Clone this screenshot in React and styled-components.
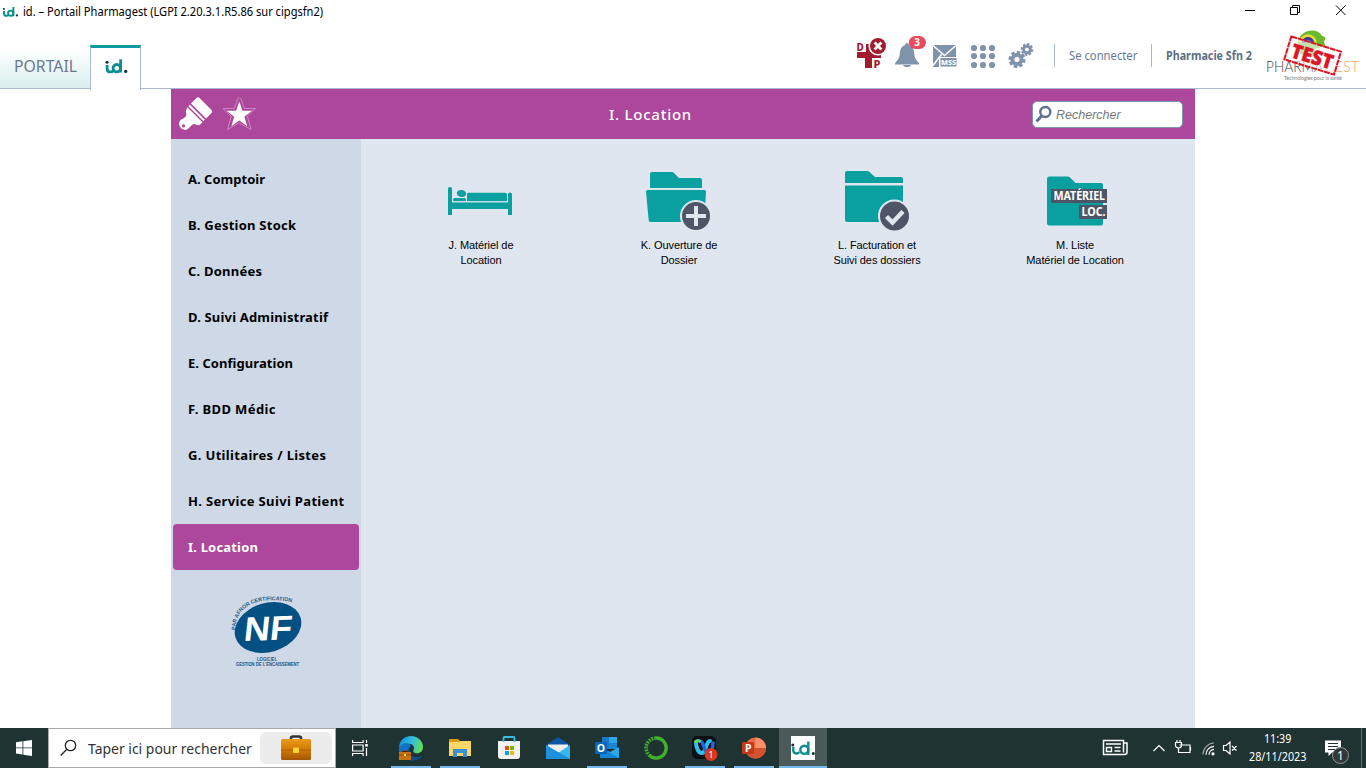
import React from "react";
import styled, { createGlobalStyle } from "styled-components";

const Global = createGlobalStyle`
  * { box-sizing: border-box; }
  html, body { margin: 0; padding: 0; background: #fff; overflow: hidden; }
  svg { display: block; flex: none; }
`;

const ui = `"Noto Sans", "Open Sans", sans-serif`;
const teal = "#0aa0a0";
const slate = "#8093ad";

const Screen = styled.div`
  width: 1366px;
  height: 768px;
  display: flex;
  flex-direction: column;
  font-family: ${ui};
`;
const TitleBar = styled.header`
  height: 24px;
  display: flex;
  align-items: center;
  padding-left: 2px;
  gap: 4px;
`;
const Squeezed = styled.span`
  display: block;
  flex: none;
  white-space: nowrap;
  width: ${(p) => p.$w}px;
  font-size: ${(p) => p.$size}px;
  line-height: ${(p) => p.$lh || 18}px;
  font-weight: ${(p) => p.$weight || 400};
  color: ${(p) => p.$color || "#000"};
  transform: scaleX(${(p) => p.$sx || 1});
  transform-origin: left center;
`;
const WindowButtons = styled.div`
  margin-left: auto;
  display: flex;
  padding: 0 18px 4px 0;
`;
const Header = styled.div`
  height: 65px;
  display: flex;
  border-bottom: 1px solid #a9b9d1;
`;
const PortalTab = styled.div`
  width: 90px;
  height: 64px;
  padding: 33px 0 0 14px;
  background: linear-gradient(#fff 40%, #d9eeee);
`;
const ActiveTab = styled.div`
  width: 51px;
  height: 44px;
  margin-top: 21px;
  background: #fff;
  border: 1px solid #a9b9d1;
  border-top: 3px solid #0e9b9b;
  border-bottom: 0;
  padding: 11px 0 0 14px;
  height: 45px;
  margin-bottom: -1px;
`;
const HeaderTools = styled.div`
  margin-left: auto;
  display: flex;
  align-items: flex-start;
`;
const ToolIcon = styled.div`
  width: ${(p) => p.$w}px;
  height: 64px;
`;
const Rule = styled.div`
  width: 1px;
  height: 23px;
  margin-top: 20px;
  background: #a9b9d1;
`;
const HeaderLink = styled.div`
  padding: 23px 0 0 14px;
  width: ${(p) => p.$w}px;
`;
const Portal = styled.main`
  width: 1024px;
  height: 639px;
  margin: 0 auto;
  display: flex;
  flex-direction: column;
  background: #dfe6f0;
`;
const SectionBar = styled.div`
  height: 50px;
  display: grid;
  grid-template-columns: 160px 1fr 163px;
  background: #ad479c;
`;
const SectionTitle = styled.h1`
  margin: 0;
  padding-left: 278px;
  font: 500 15px/51px ${ui};
  letter-spacing: 0.75px;
  color: #fff;
`;
const SearchBox = styled.div`
  width: 151px;
  height: 27px;
  margin-top: 12px;
  display: flex;
  align-items: center;
  background: #fff;
  border: 1px solid #7d93b8;
  border-radius: 5px;
  padding-left: 2px;
  gap: 4px;
  font: italic 12.5px/20px "Liberation Sans", Arial, sans-serif;
  color: #777;
`;
const Content = styled.div`
  flex: 1;
  display: flex;
`;
const Sidebar = styled.nav`
  width: 190px;
  background: #ced8e6;
  padding: 17px 2px 0;
`;
const MenuItem = styled.div`
  height: 46px;
  padding-left: 15px;
  border-radius: 4px;
  font: 700 13px/47px ${ui};
  letter-spacing: ${(p) => p.$tracking}px;
  white-space: nowrap;
  color: ${(p) => (p.$active ? "#fff" : "#000")};
  background: ${(p) => (p.$active ? "#ad479c" : "transparent")};
`;
const Certification = styled.div`
  padding: 22px 0 0 52px;
`;
const Tiles = styled.section`
  display: grid;
  grid-template-columns: repeat(4, 198px);
  align-content: start;
  padding: 29px 0 0 21px;
`;
const Tile = styled.div`
  display: flex;
  flex-direction: column;
  align-items: center;
  gap: 6px;
  text-align: center;
  white-space: pre-line;
  font: 11px/15px "Liberation Sans", Arial, sans-serif;
  letter-spacing: -0.08px;
  color: #000;
`;
const Taskbar = styled.footer`
  height: 40px;
  display: flex;
  background: #1f3332;
`;
const TaskCell = styled.div`
  width: 48px;
  height: 40px;
  margin-right: ${(p) => p.$gap || 0}px;
  display: flex;
  align-items: center;
  justify-content: center;
  position: relative;
  background: ${(p) => (p.$active ? "#4a5b5a" : "transparent")};
  &::after {
    content: "";
    position: absolute;
    bottom: 0;
    left: ${(p) => (p.$active ? 0 : 4)}px;
    right: ${(p) => (p.$active ? 0 : 4)}px;
    height: 2px;
    background: ${(p) => (p.$open ? "#76b9ed" : "transparent")};
  }
`;
const TaskSearch = styled.div`
  width: 288px;
  height: 40px;
  border: 1px solid #aaa;
  background: #fff;
  display: flex;
  align-items: center;
  padding: 0 3px 0 11px;
`;
const SearchHighlight = styled.div`
  margin-left: auto;
  width: 72px;
  height: 32px;
  border-radius: 7px;
  background: #ececec;
  display: flex;
  justify-content: center;
`;
const Tray = styled.div`
  margin-left: auto;
  display: flex;
`;
const Clock = styled.div`
  width: 72px;
  padding: 2px 0 0 1px;
  display: flex;
  flex-direction: column;
  align-items: flex-start;
`;
const ClockTime = styled.div`
  padding-left: 15px;
`;

const IdLogo = ({ w, h, d = "#0b8f8e" }) => (
  <svg width={w} height={h} viewBox="0 0 24 15">
    <g fill="none" stroke={d} strokeWidth="2.9">
      <path d="M2.200 6v3.200c0 2.700 1.500 4 3.500 4 1.300 0 2.300-.4 3.300-1.500" />
      <circle cx="12.300" cy="9.300" r="3.900" />
      <path d="M16.300 0v13.800" />
    </g>
    <circle cx="2.100" cy="3" r="1.600" fill="#14303d" />
    <circle cx="21.600" cy="12.700" r="1.700" fill="#14303d" />
  </svg>
);

const Gear = ({ x, y, r, hole, n, tooth }) => (
  <g transform={`translate(${x} ${y})`}>
    {Array.from({ length: n }, (_, i) => (
      <rect key={i} x={-tooth / 2} y={-r} width={tooth} height={r - hole} transform={`rotate(${(i * 360) / n + 12})`} fill={slate} />
    ))}
    <circle r={(r * 0.76 + hole) / 2} fill="none" stroke={slate} strokeWidth={r * 0.76 - hole} />
  </g>
);

const DpIcon = () => (
  <svg width="32" height="64" viewBox="856 24 32 64">
    <g fill="#a31c2e">
      <path d="M866 44h6.500v8h8.500v6h-9v10h-7v-10h-8v-6h9z" />
      <text x="856.500" y="51" fontFamily="Noto Sans" fontWeight="800" fontSize="10">D</text>
      <text x="873.500" y="68" fontFamily="Noto Sans" fontWeight="800" fontSize="11" stroke="#fff" strokeWidth="1.600" paintOrder="stroke">P</text>
      <circle cx="878" cy="46" r="9.600" fill="#fff" />
      <circle cx="878" cy="46" r="8" />
    </g>
    <path d="M874.600 42.600l6.800 6.800m0-6.800l-6.800 6.800" stroke="#fff" strokeWidth="2.800" />
  </svg>
);

const BellIcon = () => (
  <svg width="34" height="64" viewBox="894 24 34 64">
    <path fill={slate} d="M907 43c1.200 0 1.800.8 1.800 2 3.400 1 5.200 4 5.400 8 .2 4 1.200 6.500 4.800 10.200v1.300h-24v-1.300c3.600-3.700 4.600-6.200 4.800-10.200.2-4 2-7 5.400-8 0-1.200.6-2 1.800-2zM903 65h8c-.5 1.400-2 2-4 2s-3.500-.6-4-2z" />
    <rect x="908.800" y="36" width="17.200" height="13" rx="6.500" fill="#e94a5c" />
    <text x="917.200" y="46.200" fontSize="10" fontWeight="700" textAnchor="middle" fill="#fff" fontFamily="Noto Sans">3</text>
  </svg>
);

const MailIcon = () => (
  <svg width="34" height="64" viewBox="928 24 34 64">
    <path fill={slate} d="M933 45h23v12h-17v10h-6z" />
    <path d="M933 45.500l11.500 10 11.500-10M933 65.500l8.500-11" fill="none" stroke="#fff" strokeWidth="1.500" />
    <rect x="940" y="57.500" width="17" height="9.500" fill={slate} stroke="#fff" strokeWidth="1" />
    <text x="948.500" y="65" fontSize="7.500" fontWeight="800" textAnchor="middle" fill="#fff" fontFamily="Noto Sans" textLength="15" lengthAdjust="spacingAndGlyphs">MSS</text>
  </svg>
);

const AppsIcon = () => (
  <svg width="38" height="64" viewBox="964 24 38 64">
    {[48, 56, 65].map((y) => [974, 983, 992].map((x) => <circle key={`${x}${y}`} cx={x} cy={y} r="3.100" fill={slate} />))}
  </svg>
);

const PharmagestLogo = () => (
  <svg width="100" height="64" viewBox="1266 24 100 64">
    <path d="M1298 42c2-13 20-15 24-6 4 0 4 4 2 5l1 5-10 3-3 8-12-3z" fill="#69b92f" />
    <path d="M1300.500 43a7.500 7.500 0 0 1 15 0" fill="none" stroke="#e8dd37" strokeWidth="2.500" />
    <path d="M1302 43a6 6 0 0 1 12 0" fill="#47359a" />
    <path d="M1305 43a3 3 0 0 1 6 0" fill="#3fa6cf" />
    <text x="1266" y="72" fontFamily="Lato" fontWeight="300" fontSize="16.500" textLength="57" lengthAdjust="spacingAndGlyphs" fill="#444">PHARMA</text>
    <text x="1324" y="72" fontFamily="Lato" fontWeight="300" fontSize="16.500" textLength="35" lengthAdjust="spacingAndGlyphs" fill="#efa763">GEST</text>
    <text x="1284" y="80" fontFamily="Lato" fontSize="5.500" textLength="58" fill="#888">Technologies pour la santé</text>
    <g transform="translate(1312.500 56) rotate(17)">
      <rect x="-26" y="-12.500" width="52" height="24" fill="#fff" fillOpacity=".6" stroke="#dd1525" strokeWidth="2" strokeDasharray="6 .7" />
      <text x="0" y="7.500" textAnchor="middle" fontFamily="Noto Sans" fontWeight="900" fontSize="20" textLength="43" lengthAdjust="spacingAndGlyphs" fill="#dd1525" stroke="#dd1525" strokeWidth=".5">TEST</text>
    </g>
  </svg>
);

const Brush = () => (
  <svg width="90" height="50" viewBox="171 89 90 50">
    <g fill="#fff">
      <path d="M196.500 98q1.500-1.500 3 0l12 12q1.500 1.500 0 3l-5.500 5.500-15-15z" />
      <path d="M189.900 104.700l15 15-1.500 1.500-15-15z" />
      <path fillRule="evenodd" d="M187.400 107.200l15 15-2 2c-1.500 1.500-4 1-5.500-.2-1.500 0-2.800.7-3.700 1.700l-2.900 2.900c-4 4-11.500-2-8.500-7.500 1.500-2.500 5.500-2.800 6.500-5.900.5-2-1.300-3.500.1-5.500zM183.500 124.300a1.600 1.600 0 1 0 .1 3.200 1.600 1.600 0 0 0-.1-3.200z" />
      <path d="M239.300 101.500l3.200 9.300h9.500l-7.600 5.900 2.800 9.500-7.900-5.600-7.900 5.600 2.800-9.500-7.600-5.900h9.500z" />
    </g>
    <path d="M237.700 99q1.700-3 3.400 0l3.300 9.500h11.200l-8.200 7.500 3.600 13.500-11.700-6.500-11.700 6.500 3.600-13.500-8.200-7.500h11.200z" fill="none" stroke="#cd8fc3" strokeWidth=".9" />
  </svg>
);

const NfLogo = () => (
  <svg width="82" height="76" viewBox="225 592 82 76">
    <defs><path id="nf-arc" d="M235.500 630C235 615 245 602 267 600.500c9-.6 18 0 25 2" /></defs>
    <ellipse cx="268" cy="627.500" rx="34" ry="24.500" fill="#045083" transform="rotate(-17 268 627.500)" />
    <text fontFamily="Liberation Sans" fontSize="5.500" fontWeight="700" fill="#245d87"><textPath href="#nf-arc" textLength="73" lengthAdjust="spacingAndGlyphs">PAR AFNOR CERTIFICATION</textPath></text>
    <text x="0" y="0" fontFamily="Liberation Sans" fontWeight="700" fontSize="34" textLength="48" lengthAdjust="spacingAndGlyphs" fill="#fff" transform="translate(243 641) rotate(-2) skewX(-8)">NF</text>
    <g fontFamily="Liberation Sans" fontWeight="700" fontSize="5" fill="#1c5683" textAnchor="middle">
      <text x="267" y="660.500" textLength="20" lengthAdjust="spacingAndGlyphs">LOGICIEL</text>
      <text x="267.500" y="665.800" textLength="63" lengthAdjust="spacingAndGlyphs">GESTION DE L'ENCAISSEMENT</text>
    </g>
  </svg>
);

const BedIcon = () => (
  <svg width="64" height="64" viewBox="449 168 64 64" fill={teal} overflow="visible">
    <path d="M448 188.500q0-1.500 2-1.500t2 1.500V202h56v-8q0-1.500 2-1.500t2 1.500v21h-4v-6h-56v6h-4z" />
    <ellipse cx="461.500" cy="193.500" rx="4.700" ry="3.500" transform="rotate(8 461.500 193.500)" />
    <rect x="453" y="198" width="13" height="3.200" rx="1.500" />
    <path d="M468 192.700h37q2 0 2 2v6.500h-40v-6.500q0-2 1-2z" />
    <path d="M452 202h56" stroke="#dfe6f0" strokeWidth=".9" />
  </svg>
);
const OpenFolder = () => (
  <svg width="64" height="64" viewBox="647 168 64 64" overflow="visible">
    <path fill={teal} d="M650 188v-14q0-2 2-2h20q1 0 2 1l5 5h21q2 0 2 2v8zM647.500 190h57q1.500 0 1.500 1.500l-1.600 29q-.1 1.500-2 1.500h-51.500q-2 0-2.200-1.500L646 191.500q0-1.500 1.500-1.500z" />
    <circle cx="696" cy="216" r="15" fill="#4d5566" stroke="#dfe6f0" strokeWidth="2" />
    <path d="M696 206v20M686 216h20" stroke="#dfe6f0" strokeWidth="4" />
  </svg>
);
const CheckedFolder = () => (
  <svg width="64" height="64" viewBox="845 168 64 64">
    <path fill={teal} d="M845 183v-10q0-2 2-2h20q1.500 0 2.500 1l5.500 5h26q2 0 2 2v4zM845 185.500h58V222h-56q-2 0-2-2z" />
    <circle cx="894.500" cy="216" r="15.500" fill="#4d5566" stroke="#dfe6f0" strokeWidth="2" />
    <path d="M886.500 216.500l6 6 10.500-11" fill="none" stroke="#dfe6f0" strokeWidth="4.500" />
  </svg>
);
const EquipmentFolder = () => (
  <svg width="64" height="64" viewBox="1043 168 64 64">
    <path fill={teal} d="M1047 179q0-2.500 2-2.500h18.500q1.500 0 2.500 1l5.500 5.500h25.500q2 0 2 2v38q0 2.500-2 2.500h-51.500q-2.500 0-2.500-2.500z" />
    <path fill="#4d5566" d="M1051 189h56v14h-56zM1079 205h28v14h-28z" />
    <g fill="#fff" fontFamily="Noto Sans" fontWeight="700" fontSize="12">
      <text x="1053.500" y="200.400" textLength="51.500" lengthAdjust="spacingAndGlyphs">MATÉRIEL</text>
      <text x="1081.500" y="216.400" textLength="24" lengthAdjust="spacingAndGlyphs">LOC.</text>
    </g>
  </svg>
);

const EdgeIcon = () => (
  <svg width="26" height="26" viewBox="0 0 26 26">
    <defs><linearGradient id="edge" x1="0" y1="0.200" x2="1" y2=".4"><stop stopColor="#168bd9" /><stop offset=".55" stopColor="#32bedc" /><stop offset="1" stopColor="#65dc5c" /></linearGradient></defs>
    <path d="M1 13C1 5 7 1 13 1c7 0 12 5 12 11 0 5-4 7-8 6-3-1-1-3-1-5 0-5-9-6-15 0z" fill="url(#edge)" />
    <path d="M1 13c3-6 10-6 12-2-3 2-3 9 3 11 3 1 6 0 8-1-3 4-8 5-12 4C5 24 0 19 1 13z" fill="#1272c8" />
    <path d="M13 11c-3 3-3 9 3 11 3 1 6 0 8-1-3 4-8 5-12 4-5-4-4-11 1-14z" fill="#114c8c" />
    <path d="M1 17h12v8H1z" fill="#c97310" /><path d="M4 17v-1h6v1M1 20h12" stroke="#8a480b" /><path d="M6 19h2v2H6z" fill="#ffd43b" />
  </svg>
);
const ExplorerIcon = () => (
  <svg width="24" height="22" viewBox="0 0 24 22">
    <path d="M1 2h9l2 2h10v6H1z" fill="#dd9b08" /><path d="M1 5h10l1-1h11v15H1z" fill="#ffd768" />
    <path d="M5 12h14v8h-4v-4H9v4H5z" fill="#3992d8" />
  </svg>
);
const StoreIcon = () => (
  <svg width="24" height="24" viewBox="0 0 24 24">
    <path d="M1 5h22v15q0 3-3 3H4q-3 0-3-3z" fill="#f2f2f2" />
    <path d="M6.500 6V2q0-1 1-1h9q1 0 1 1v4" fill="none" stroke="#38bce8" strokeWidth="1.800" />
    <path d="M8 10h4v4H8z" fill="#e64a24" /><path d="M13 10h4v4h-4z" fill="#73b900" /><path d="M8 15h4v4H8z" fill="#00a1ed" /><path d="M13 15h4v4h-4z" fill="#ffb800" />
  </svg>
);
const MailApp = () => (
  <svg width="26" height="24" viewBox="0 0 26 24">
    <path d="M1 9L13 1l12 8v5H1z" fill="#0b57a4" /><path d="M3 8.500h20v8H3z" fill="#eee" />
    <path d="M1 9l12 8L25 9v14H1z" fill="#38b5ef" /><path d="M1 9l24 14H1z" fill="#1c91de" />
  </svg>
);
const OutlookIcon = () => (
  <svg width="26" height="24" viewBox="0 0 26 24">
    <path d="M8 1h15v12H8z" fill="#1479c9" /><path d="M15 1h8v6h-8z" fill="#30a6e8" /><path d="M15 7h8v6h-8z" fill="#1c85d0" />
    <path d="M6 11l10 5 9-5v11H6z" fill="#2aa8e8" /><path d="M6 11l19 11H6z" fill="#1485d5" />
    <rect x="1" y="6" width="12" height="12" rx="1" fill="#0864b8" />
    <text x="7" y="15.800" fontFamily="Noto Sans" fontWeight="700" fontSize="10.500" textAnchor="middle" fill="#fff">O</text>
  </svg>
);
const RingIcon = () => (
  <svg width="26" height="26" viewBox="0 0 26 26" fill="none" stroke="#43b02a">
    <path d="M13 3a10 10 0 1 1-7 17" strokeWidth="3.400" /><path d="M13 3A10 10 0 0 0 6 20" strokeWidth="3.600" strokeDasharray="1.800 1" />
  </svg>
);
const WebexIcon = () => (
  <svg width="28" height="28" viewBox="0 0 28 28">
    <rect x="1" y="2" width="24" height="23" rx="5" fill="#0c1015" />
    <path d="M5 8c0 7 3 11 6 11 4 0 4-12 8-12" stroke="#2cbff0" strokeWidth="4" fill="none" strokeLinecap="round" />
    <path d="M9 7c4 0 4 12 8 12 3 0 5-4 5-10" stroke="#2565df" strokeWidth="3.500" fill="none" strokeLinecap="round" />
    <path d="M4.500 9c0-3 3-3 5-1" stroke="#62d568" strokeWidth="3" fill="none" />
    <circle cx="20" cy="20.500" r="6.500" fill="#d9371e" /><text x="20" y="24" fontSize="9.500" fontFamily="Noto Sans" textAnchor="middle" fill="#fff">1</text>
  </svg>
);
const PowerpointIcon = () => (
  <svg width="26" height="24" viewBox="0 0 26 24">
    <circle cx="14.500" cy="12" r="10.500" fill="#ed6c47" /><path d="M14.500 1.500A10.500 10.500 0 0 1 25 12H14.500z" fill="#ff8f6b" /><path d="M4 12h21a10.500 10.500 0 0 1-21 0z" fill="#d35230" />
    <rect x="1" y="6" width="12" height="12" rx="1" fill="#c13b1b" /><text x="7.200" y="15.800" fontFamily="Noto Sans" fontWeight="700" fontSize="10.500" textAnchor="middle" fill="#fff">P</text>
  </svg>
);
const IdTaskIcon = () => (
  <svg width="24" height="24" viewBox="0 0 24 24">
    <path fill="#fff" d="M0 0h24v24H0z" />
    <g fill="none" stroke="#0b8f8e" strokeWidth="2.400"><path d="M2.300 11v3.500c0 3 4 4 6 1.500" /><circle cx="13.300" cy="13.800" r="4" /><path d="M17.300 5.500V19" /></g>
    <circle cx="1.800" cy="9" r="1.500" fill="#14303d" /><circle cx="22.300" cy="17.500" r="1.500" fill="#14303d" />
  </svg>
);
const Briefcase = () => (
  <svg width="32" height="32" viewBox="280 732 32 32">
    <defs><linearGradient id="case" x1="0" y1="0" x2="0" y2="1"><stop stopColor="#e99a16" /><stop offset=".5" stopColor="#d27c07" /><stop offset="1" stopColor="#a45605" /></linearGradient></defs>
    <path d="M291 740v-2q0-1.500 2-1.500h6q2 0 2 1.500v2" fill="none" stroke="#30343a" strokeWidth="2.500" />
    <rect x="281" y="739" width="30" height="21" rx="1.500" fill="url(#case)" /><path d="M281 750h30" stroke="#aa5d09" />
    <rect x="293" y="747.500" width="6" height="5.500" rx="1" fill="#ffd42a" />
  </svg>
);
const TrayIcons = () => (
  <svg width="153" height="40" viewBox="1095 728 153 40" fill="none" stroke="#fff" strokeWidth="1.200">
    <path d="M1106.500 754.500h-3v-14h20v2.500h3.500v9q0 2.500-2.500 2.500h-18zM1123.500 743v9.500" strokeWidth="1.500" />
    <path d="M1106 744h15M1114.500 747.500h6M1114.500 751h6" strokeWidth="1.400" /><path d="M1106.500 747.500h5v4h-5z" strokeWidth="1.400" />
    <path d="M1153.500 751l5.500-5.500 5.500 5.500" />
    <path d="M1179.500 745h10.500v7.500h-8.500M1190.500 747v3.500M1175.500 742.500h6v3q0 2-3 2.500-3-.5-3-2.500zM1177 740v2.500M1180 740v2.500M1178.500 748v4.500h5" />
    <g><path d="M1203 754.500a11.500 11.500 0 0 1 11-11.500" opacity=".55" /><path d="M1206 754.800a8.500 8.500 0 0 1 8-8.500M1209 754.800a5.500 5.500 0 0 1 5-5.500" /><circle cx="1213" cy="753.800" r="1" fill="#fff" /></g>
    <path d="M1223.500 745.500h2.500l4-3.500v12l-4-3.500h-2.500zM1232 746l4.500 4.500m0-4.500l-4.500 4.500" />
  </svg>
);

const menu = [
  ["A. Comptoir", 0.02], ["B. Gestion Stock", 0.24], ["C. Données", 0.22], ["D. Suivi Administratif", 0.17], ["E. Configuration", 0.05],
  ["F. BDD Médic", 0.38], ["G. Utilitaires / Listes", 0.34], ["H. Service Suivi Patient", 0.34], ["I. Location", 0.18, true],
];
const tiles = [
  [<BedIcon />, "J. Matériel de\nLocation"], [<OpenFolder />, "K. Ouverture de\nDossier"],
  [<CheckedFolder />, "L. Facturation et\nSuivi des dossiers"], [<EquipmentFolder />, "M. Liste\nMatériel de Location"],
];
const apps = [
  [<EdgeIcon />, true], [<ExplorerIcon />, true], [<StoreIcon />, false], [<MailApp />, false], [<OutlookIcon />, true],
  [<RingIcon />, false], [<WebexIcon />, true], [<PowerpointIcon />, true],
];

export default function App() {
  return (
    <Screen>
      <Global />
      <TitleBar>
        <IdLogo w={17} h={10} />
        <Squeezed $w={310} $size={12} $sx={0.925}>id. – Portail Pharmagest (LGPI 2.20.3.1.R5.86 sur cipgsfn2)</Squeezed>
        <WindowButtons>
          <svg width="104" height="12" viewBox="1244 4 104 12" fill="none" stroke="#000">
            <path d="M1245 10.500h10M1290.500 7.500h7v7h-7zM1292.500 7.500v-2h7v7h-2M1336 5.500l9.500 9.500m0-9.500l-9.500 9.500" />
          </svg>
        </WindowButtons>
      </TitleBar>
      <Header>
        <PortalTab><Squeezed $w={63} $size={16} $sx={0.985} $color="#6a7891">PORTAIL</Squeezed></PortalTab>
        <ActiveTab><IdLogo w={23} h={15} /></ActiveTab>
        <HeaderTools>
          <ToolIcon $w={38}><DpIcon /></ToolIcon>
          <ToolIcon $w={34}><BellIcon /></ToolIcon>
          <ToolIcon $w={36}><MailIcon /></ToolIcon>
          <ToolIcon $w={40}><AppsIcon /></ToolIcon>
          <ToolIcon $w={50}>
            <svg width="50" height="64" viewBox="1004 24 50 64">
              <Gear x={1017} y={59.5} r={8.5} hole={2.8} n={8} tooth={3.6} />
              <Gear x={1027} y={49.5} r={6.3} hole={2} n={8} tooth={2.6} />
            </svg>
          </ToolIcon>
          <Rule />
          <HeaderLink $w={96}><Squeezed $w={70} $size={12.5} $sx={0.9} $color="#6a7891">Se connecter</Squeezed></HeaderLink>
          <Rule />
          <HeaderLink $w={114}><Squeezed $w={90} $size={12.5} $sx={0.86} $weight={700} $color="#5f6e87">Pharmacie Sfn 2</Squeezed></HeaderLink>
          <PharmagestLogo />
        </HeaderTools>
      </Header>
      <Portal>
        <SectionBar>
          <Brush />
          <SectionTitle>I. Location</SectionTitle>
          <SearchBox>
            <svg width="17" height="19" viewBox="0 0 17 19" fill="none" stroke="#5f7190">
              <circle cx="10.300" cy="7" r="5" strokeWidth="2.400" /><path d="M6.800 10.800L1.500 16.500" strokeWidth="3" />
            </svg>
            Rechercher
          </SearchBox>
        </SectionBar>
        <Content>
          <Sidebar>
            {menu.map(([label, tracking, active]) => <MenuItem key={label} $tracking={tracking} $active={active}>{label}</MenuItem>)}
            <Certification><NfLogo /></Certification>
          </Sidebar>
          <Tiles>
            {tiles.map(([icon, label]) => <Tile key={label}>{icon}<span>{label}</span></Tile>)}
          </Tiles>
        </Content>
      </Portal>
      <Taskbar>
        <TaskCell>
          <svg width="16" height="16" viewBox="0 0 16 16" fill="#fff"><path d="M0 2.300l6.500-1v6.200H0zM7.300 1.200L16 0v7.500H7.300zM0 8.300h6.500v6.200L0 13.600zM7.300 8.300H16V16l-8.700-1.300z" /></svg>
        </TaskCell>
        <TaskSearch>
          <svg width="28" height="18" viewBox="0 0 28 18" fill="none" stroke="#222" strokeWidth="1.300"><circle cx="10.500" cy="6.500" r="5.200" /><path d="M6.800 10.200L.7 16.500" /></svg>
          <Squeezed $w={160} $size={15} $sx={0.93} $lh={20} $color="#333">Taper ici pour rechercher</Squeezed>
          <SearchHighlight><Briefcase /></SearchHighlight>
        </TaskSearch>
        <TaskCell $gap={3}>
          <svg width="17" height="16" viewBox="0 0 17 16" fill="none" stroke="#fff" strokeWidth="1.200"><path d="M.6 0v2.500h10.500V0M.6 5h10.500v6H.6zM.6 16v-2.500h10.500V16M14.500 0v3M14.500 8v8" /><path d="M13.200 4h2.600v2.600h-2.600z" fill="#fff" stroke="none" /></svg>
        </TaskCell>
        {apps.map(([icon, open], i) => <TaskCell key={i} $gap={1} $open={open}>{icon}</TaskCell>)}
        <TaskCell $active $open><IdTaskIcon /></TaskCell>
        <Tray>
          <TrayIcons />
          <Clock>
            <ClockTime><Squeezed $w={30} $size={12} $sx={0.89} $color="#fff">11:39</Squeezed></ClockTime>
            <Squeezed $w={60} $size={12} $sx={0.9} $color="#fff">28/11/2023</Squeezed>
          </Clock>
          <svg width="46" height="40" viewBox="1320 728 46 40">
            <path d="M1325 740.500h16v12h-9l-3.500 3.500v-3.500h-3.500z" fill="#fff" /><path d="M1328 743.500h10M1328 746.500h10M1328 749.500h7" stroke="#1f3332" />
            <circle cx="1340.500" cy="755.500" r="8" fill="#333938" stroke="#8f9897" /><text x="1340.500" y="760" fontSize="12" textAnchor="middle" fill="#fff" fontFamily="Noto Sans">1</text>
            <path d="M1361.500 728v40" stroke="#62706f" />
          </svg>
        </Tray>
      </Taskbar>
    </Screen>
  );
}
